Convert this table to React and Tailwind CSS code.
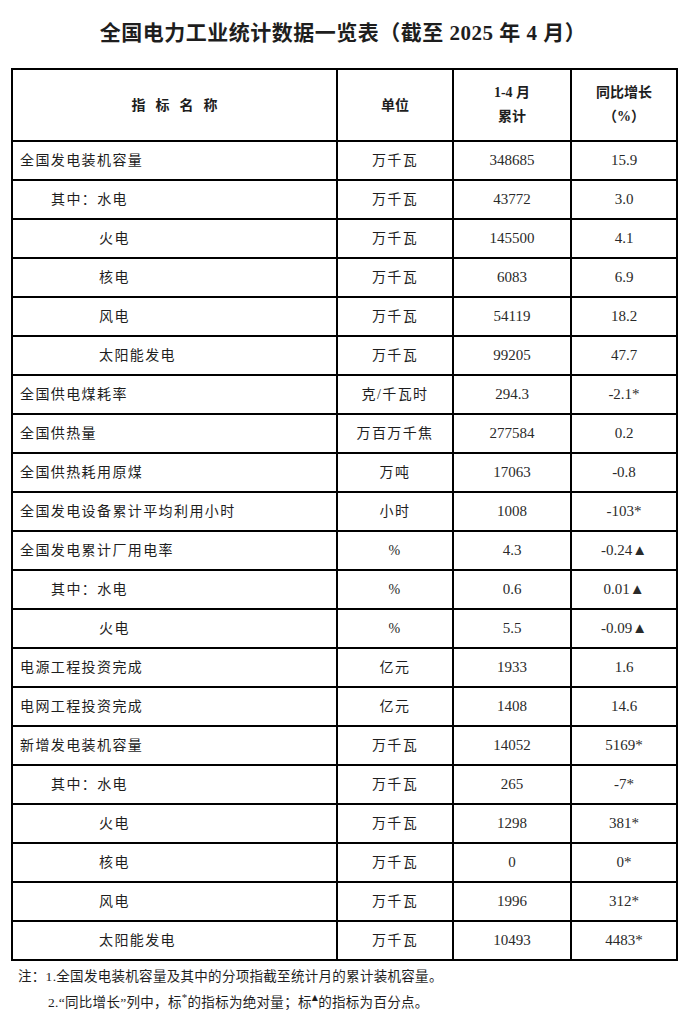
import React from 'react'

// 全国电力工业统计数据一览表
const rows = [
  { name: '全国发电装机容量', level: 0, unit: '万千瓦', value: '348685', yoy: '15.9' },
  { name: '其中：水电', level: 1, unit: '万千瓦', value: '43772', yoy: '3.0' },
  { name: '火电', level: 2, unit: '万千瓦', value: '145500', yoy: '4.1' },
  { name: '核电', level: 2, unit: '万千瓦', value: '6083', yoy: '6.9' },
  { name: '风电', level: 2, unit: '万千瓦', value: '54119', yoy: '18.2' },
  { name: '太阳能发电', level: 2, unit: '万千瓦', value: '99205', yoy: '47.7' },
  { name: '全国供电煤耗率', level: 0, unit: '克/千瓦时', value: '294.3', yoy: '-2.1*' },
  { name: '全国供热量', level: 0, unit: '万百万千焦', value: '277584', yoy: '0.2' },
  { name: '全国供热耗用原煤', level: 0, unit: '万吨', value: '17063', yoy: '-0.8' },
  { name: '全国发电设备累计平均利用小时', level: 0, unit: '小时', value: '1008', yoy: '-103*' },
  { name: '全国发电累计厂用电率', level: 0, unit: '%', value: '4.3', yoy: '-0.24▲' },
  { name: '其中：水电', level: 1, unit: '%', value: '0.6', yoy: '0.01▲' },
  { name: '火电', level: 2, unit: '%', value: '5.5', yoy: '-0.09▲' },
  { name: '电源工程投资完成', level: 0, unit: '亿元', value: '1933', yoy: '1.6' },
  { name: '电网工程投资完成', level: 0, unit: '亿元', value: '1408', yoy: '14.6' },
  { name: '新增发电装机容量', level: 0, unit: '万千瓦', value: '14052', yoy: '5169*' },
  { name: '其中：水电', level: 1, unit: '万千瓦', value: '265', yoy: '-7*' },
  { name: '火电', level: 2, unit: '万千瓦', value: '1298', yoy: '381*' },
  { name: '核电', level: 2, unit: '万千瓦', value: '0', yoy: '0*' },
  { name: '风电', level: 2, unit: '万千瓦', value: '1996', yoy: '312*' },
  { name: '太阳能发电', level: 2, unit: '万千瓦', value: '10493', yoy: '4483*' },
]

const indent = ['pl-[7px]', 'pl-[38px]', 'pl-[86px]']

export default function App() {
  return (
    <div className="w-[686px] h-[1024px] bg-white text-[#1e1e1e] font-['Liberation_Serif','Noto_Sans_CJK_SC',serif]">
      {/* Title */}
      <h1 className="pt-[18px] h-[68px] text-center text-[21px] font-bold tracking-[0.5px]">
        全国电力工业统计数据一览表（截至 2025 年 4 月）
      </h1>

      <div className="px-[11px]">
        <table className="w-[665px] border-collapse border-2 border-black table-fixed">
          <colgroup>
            <col className="w-[325px]" />
            <col className="w-[116px]" />
            <col className="w-[118px]" />
            <col className="w-[106px]" />
          </colgroup>
          <thead>
            <tr className="h-[72px] text-[14px] font-bold">
              <th className="border-2 border-black text-center tracking-[10px] pl-[10px]">指标名称</th>
              <th className="border-2 border-black text-center">单位</th>
              <th className="border-2 border-black text-center leading-[24px]">
                1-4 月<br />累计
              </th>
              <th className="border-2 border-black text-center leading-[24px]">
                同比增长<br />（%）
              </th>
            </tr>
          </thead>
          <tbody>
            {rows.map((r, i) => (
              <tr key={i} className="h-[39px] text-[14px]">
                <td className={`border-2 border-black tracking-[1.4px] ${indent[r.level]}`}>{r.name}</td>
                <td className="border-2 border-black text-center tracking-[1.4px]">{r.unit}</td>
                <td className="border-2 border-black text-center text-[15px] text-[#2a2a2a]">{r.value}</td>
                <td className="border-2 border-black text-center text-[15px] text-[#2a2a2a]">{r.yoy}</td>
              </tr>
            ))}
          </tbody>
        </table>
      </div>

      {/* Notes */}
      <div className="pt-[3px] pl-[18px] text-[13.5px] leading-[26px] tracking-[0.3px]">
        <p>注：1.全国发电装机容量及其中的分项指截至统计月的累计装机容量。</p>
        <p className="pl-[30px]">
          2.“同比增长”列中，标<span className="inline-block align-top text-[11px] leading-[14px]">*</span>
          的指标为绝对量；标<span className="inline-block align-top text-[8px] leading-[16px] font-['DejaVu_Sans',sans-serif]">▲</span>
          的指标为百分点。
        </p>
      </div>
    </div>
  )
}
